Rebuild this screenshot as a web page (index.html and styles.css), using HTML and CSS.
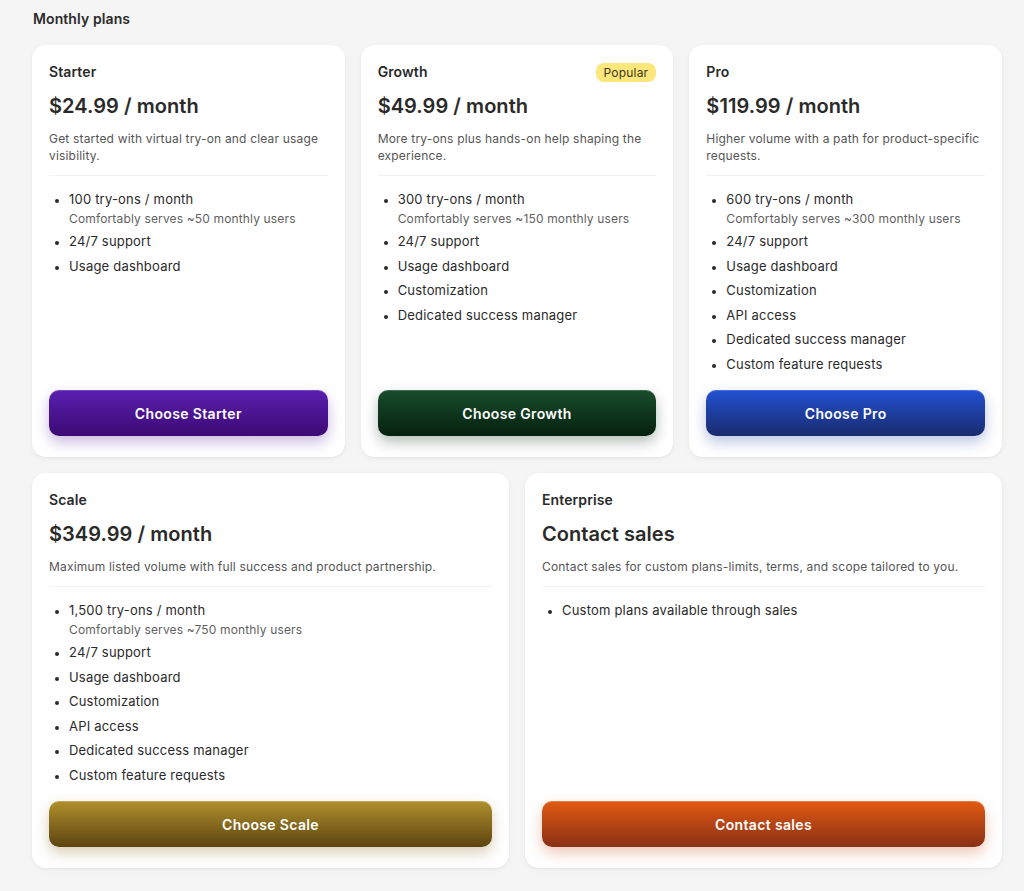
FILE: index.html
```html
<!DOCTYPE html>
<html lang="en">
<head>
<meta charset="utf-8">
<title>Monthly plans</title>
<link rel="stylesheet" href="styles.css">
</head>
<body>
<main class="page">
  <h2 class="section-title">Monthly plans</h2>
  <div class="grid grid-3">
    <section class="card">
      <div class="card-head"><h3 class="plan-name">Starter</h3></div>
      <div class="price">$24.99 / month</div>
      <p class="desc">Get started with virtual try-on and clear usage visibility.</p>
      <ul class="features">
        <li>100 try-ons / month<span class="sub">Comfortably serves ~50 monthly users</span></li>
        <li>24/7 support</li>
        <li>Usage dashboard</li>
      </ul>
      <button class="btn btn-starter">Choose Starter</button>
    </section>
    <section class="card">
      <div class="card-head"><h3 class="plan-name">Growth</h3><span class="badge">Popular</span></div>
      <div class="price">$49.99 / month</div>
      <p class="desc">More try-ons plus hands-on help shaping the experience.</p>
      <ul class="features">
        <li>300 try-ons / month<span class="sub">Comfortably serves ~150 monthly users</span></li>
        <li>24/7 support</li>
        <li>Usage dashboard</li>
        <li>Customization</li>
        <li>Dedicated success manager</li>
      </ul>
      <button class="btn btn-growth">Choose Growth</button>
    </section>
    <section class="card">
      <div class="card-head"><h3 class="plan-name">Pro</h3></div>
      <div class="price">$119.99 / month</div>
      <p class="desc">Higher volume with a path for product-specific requests.</p>
      <ul class="features">
        <li>600 try-ons / month<span class="sub">Comfortably serves ~300 monthly users</span></li>
        <li>24/7 support</li>
        <li>Usage dashboard</li>
        <li>Customization</li>
        <li>API access</li>
        <li>Dedicated success manager</li>
        <li>Custom feature requests</li>
      </ul>
      <button class="btn btn-pro">Choose Pro</button>
    </section>
  </div>
  <div class="grid grid-2">
    <section class="card">
      <div class="card-head"><h3 class="plan-name">Scale</h3></div>
      <div class="price">$349.99 / month</div>
      <p class="desc">Maximum listed volume with full success and product partnership.</p>
      <ul class="features">
        <li>1,500 try-ons / month<span class="sub">Comfortably serves ~750 monthly users</span></li>
        <li>24/7 support</li>
        <li>Usage dashboard</li>
        <li>Customization</li>
        <li>API access</li>
        <li>Dedicated success manager</li>
        <li>Custom feature requests</li>
      </ul>
      <button class="btn btn-scale">Choose Scale</button>
    </section>
    <section class="card">
      <div class="card-head"><h3 class="plan-name">Enterprise</h3></div>
      <div class="price">Contact sales</div>
      <p class="desc">Contact sales for custom plans-limits, terms, and scope tailored to you.</p>
      <ul class="features">
        <li>Custom plans available through sales</li>
      </ul>
      <button class="btn btn-sales">Contact sales</button>
    </section>
  </div>
</main>
</body>
</html>
```
FILE: styles.css
```css
* { box-sizing: border-box; }
html, body { margin: 0; padding: 0; }
body {
  background: #f5f5f5;
  font-family: Inter, "Noto Sans", "Liberation Sans", sans-serif;
  color: #27272a;
}
.page {
  width: 970px;
  margin-left: 32px;
  padding-top: 9px;
  padding-bottom: 22px;
}
.section-title {
  margin: 0 0 16px 1px;
  font-size: 14px;
  line-height: 20px;
  font-weight: 600;
  color: #2a2a2a;
  letter-spacing: 0.1px;
}
.grid {
  display: grid;
  gap: 16px;
  margin-bottom: 16px;
}
.grid-3 { grid-template-columns: repeat(3, 1fr); }
.grid-2 { grid-template-columns: repeat(2, 1fr); }
.card {
  background: #fff;
  border-radius: 14px;
  box-shadow: 0 1px 3px rgba(0,0,0,0.05), 0 2px 8px rgba(0,0,0,0.03);
  padding: 17px 17px 21px;
  display: flex;
  flex-direction: column;
}
.card-head {
  display: flex;
  justify-content: space-between;
  align-items: center;
  height: 20px;
}
.plan-name {
  margin: 0;
  font-size: 14px;
  line-height: 20px;
  font-weight: 600;
  color: #2a2a2a;
  letter-spacing: 0.1px;
}
.badge {
  background: #fce77c;
  color: #3d3818;
  font-size: 12px;
  line-height: 19px;
  padding: 0 8px;
  border-radius: 8px;
  letter-spacing: 0.2px;
}
.price {
  margin-top: 10px;
  font-size: 20px;
  line-height: 28px;
  font-weight: 600;
  color: #2a2a2a;
  letter-spacing: 0.05px;
}
.desc {
  margin: 10px 0 0;
  font-size: 12px;
  line-height: 17px;
  color: #555;
  letter-spacing: 0.18px;
  padding-bottom: 11px;
  border-bottom: 1px solid #f2f2f2;
}
.features {
  margin: 13px 0 12px;
  padding-left: 20px;
  list-style: disc;
  font-size: 13px;
  line-height: 20px;
  color: #2a2a2a;
  letter-spacing: 0.2px;
}
.features li { margin-bottom: 4.5px; }
.features li::marker { font-size: 11px; }
.sub {
  display: block;
  font-size: 12px;
  line-height: 17px;
  color: #5f5f5f;
  margin-top: 0.5px;
  letter-spacing: 0.15px;
}
.btn {
  margin-top: auto;
  height: 46px;
  width: 100%;
  border: 0;
  border-radius: 10px;
  color: #fff;
  font-family: inherit;
  font-size: 14px;
  font-weight: 600;
  letter-spacing: 0.35px;
  cursor: pointer;
  flex-shrink: 0;
}
.btn-starter {
  background: linear-gradient(#5a1fb0, #3c0a74);
  box-shadow: inset 0 1px 0 rgba(255,255,255,0.18), 0 6px 14px rgba(80,20,160,0.3);
}
.btn-growth {
  background: linear-gradient(#194d2c, #05200e);
  box-shadow: inset 0 1px 0 rgba(255,255,255,0.18), 0 6px 14px rgba(10,40,20,0.3);
}
.btn-pro {
  background: linear-gradient(#2251d2, #1a2b6e);
  box-shadow: inset 0 1px 0 rgba(255,255,255,0.18), 0 6px 14px rgba(30,60,170,0.3);
}
.btn-scale {
  background: linear-gradient(#b0902c, #5d4411);
  box-shadow: inset 0 1px 0 rgba(255,255,255,0.2), 0 6px 14px rgba(130,95,20,0.3);
}
.btn-sales {
  background: linear-gradient(#e25a13, #893015);
  box-shadow: inset 0 1px 0 rgba(255,255,255,0.2), 0 6px 14px rgba(200,70,20,0.3);
}
```
